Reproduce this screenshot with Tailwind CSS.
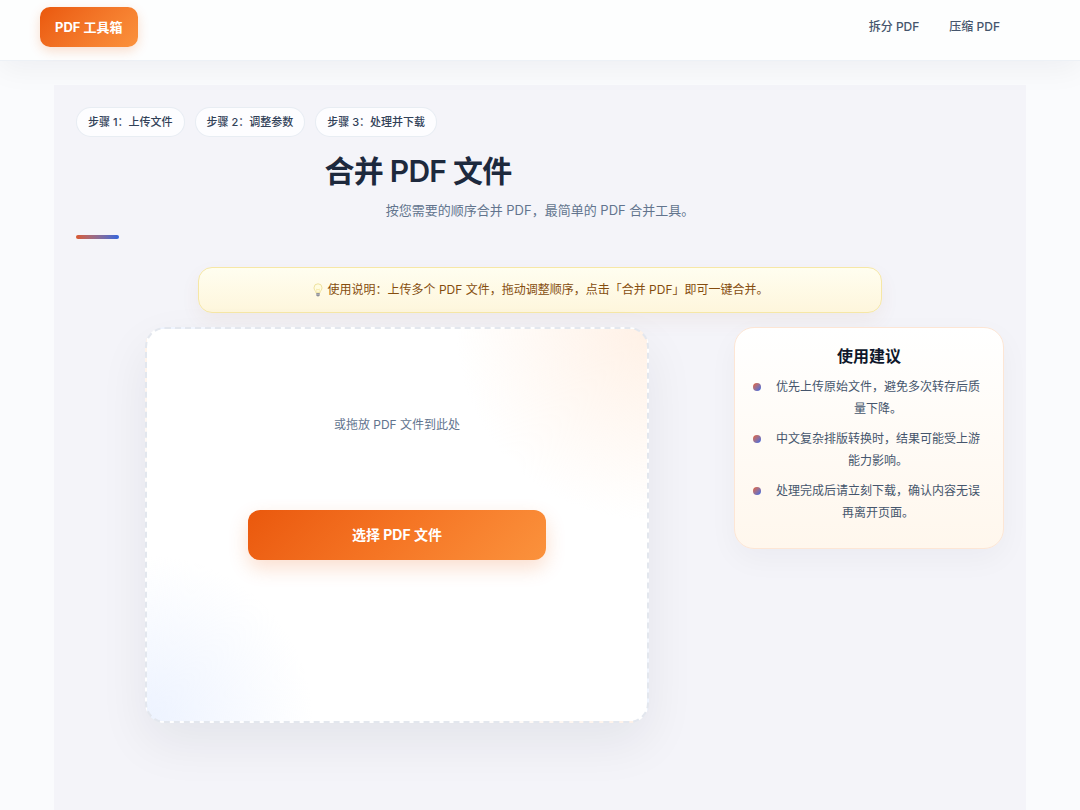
<!DOCTYPE html>
<html lang="zh-CN">
<head>
    <meta charset="UTF-8">
    <meta name="viewport" content="width=device-width, initial-scale=1.0">
    <title>合并 PDF 文件 - PDF 工具箱</title>
    <script src="https://cdn.jsdelivr.net/npm/@tailwindcss/browser@4"></script>
</head>
<body class="min-h-screen overflow-x-hidden bg-[#fafbfd] font-['Inter','Noto_Sans_CJK_SC',sans-serif] text-slate-800">
    <!-- Header -->
    <header class="relative z-10 flex items-center justify-between border-b border-slate-200/60 bg-[#fdfefe] pt-[7px] pr-20 pb-[13px] pl-10 shadow-[0_8px_30px_rgba(15,23,42,0.05)]">
        <a href="#" class="rounded-[10px] bg-linear-135 from-[#ea580c] to-[#fb923c] px-[15px] py-[10px] text-[13px] leading-5 font-bold text-white shadow-[0_4px_12px_rgba(234,88,12,0.2)]">PDF 工具箱</a>
        <nav class="flex gap-[30px] text-xs leading-5 font-medium text-slate-600">
            <a href="#">拆分 PDF</a>
            <a href="#">压缩 PDF</a>
        </nav>
    </header>

    <!-- Main content area -->
    <main class="mx-auto mt-6 min-h-[calc(100vh-84px)] w-[90%] bg-[#f4f4f9] px-[22px] pt-[22px] pb-16">
        <ol class="flex gap-[10px] text-[11px] leading-5 font-medium text-slate-700">
            <li class="rounded-full border border-slate-200/80 bg-[#fdfdff] px-[11px] py-1">步骤 1：上传文件</li>
            <li class="rounded-full border border-slate-200/80 bg-[#fdfdff] px-[11px] py-1">步骤 2：调整参数</li>
            <li class="rounded-full border border-slate-200/80 bg-[#fdfdff] px-[11px] py-1">步骤 3：处理并下载</li>
        </ol>

        <h1 class="mt-4 max-w-[684px] text-center text-3xl leading-9 font-semibold tracking-tight">合并 PDF 文件</h1>
        <p class="mt-[9px] text-center text-[13px] leading-6 text-slate-500">按您需要的顺序合并 PDF，最简单的 PDF 合并工具。</p>
        <div class="mt-[13px] h-1 w-[43px] rounded-full bg-linear-to-r from-[#d9572b] to-[#2f63dc]"></div>

        <!-- Usage hint -->
        <div class="mx-auto mt-7 flex max-w-[684px] items-center justify-center gap-1 rounded-[14px] border border-[#f6e7a6] bg-linear-to-b from-[#fffef0] to-[#fef6dc] px-4 py-3 text-xs leading-5 text-[#854d0e] shadow-[0_8px_20px_rgba(146,64,14,0.06)]">
            <svg class="h-[14px] w-3" viewBox="0 0 12 14" fill="none" aria-hidden="true">
                <path d="M6 .8a4 4 0 0 0-4 4c0 2 1.6 2.8 2 5h4c.4-2.2 2-3 2-5a4 4 0 0 0-4-4z" fill="#fffce0" stroke="#eee2a0" stroke-width="1"/>
                <path d="M5 9.500 4.600 6l1.400.8L7.400 6 7 9.500" stroke="#f0dc88" stroke-width=".5"/>
                <path d="M4.300 10h3.400v2.300c0 .6-.6 1.200-1.700 1.200s-1.700-.6-1.700-1.200z" fill="#8d8f96"/>
                <path d="M4.300 11.300h3.400" stroke="#c9cbd1" stroke-width=".6"/>
            </svg>
            <p>使用说明：上传多个 PDF 文件，拖动调整顺序，点击「合并 PDF」即可一键合并。</p>
        </div>

        <div class="mt-[14px] grid grid-cols-[minmax(0,1fr)_270px] items-start gap-4">
            <!-- Drop zone -->
            <section class="mx-auto flex min-h-[396px] w-full max-w-[504px] flex-col items-center rounded-[20px] border-2 border-dashed border-[#e3e7ee] bg-white bg-[radial-gradient(circle_at_100%_0%,#fff1e6_0%,#fff1e600_30%),radial-gradient(circle_at_0%_100%,#edf3ff_0%,#edf3ff00_26%)] px-6 pt-[84px] shadow-[0_20px_50px_rgba(15,23,42,0.07)]">
                <p class="text-xs leading-6 text-slate-500">或拖放 PDF 文件到此处</p>
                <button type="button" class="mt-[73px] h-[50px] w-full max-w-[298px] rounded-[12px] bg-linear-135 from-[#ea580c] via-[#f57524] to-[#fb923c] text-sm font-bold text-white shadow-[0_8px_20px_rgba(234,88,12,0.2)]">选择 PDF 文件</button>
            </section>

            <!-- Tips -->
            <aside class="rounded-[20px] border border-[#fde6d5] bg-linear-to-b from-white to-[#fff7ed] px-[18px] pt-4 pb-6 text-center shadow-[0_10px_30px_rgba(15,23,42,0.04)]">
                <h2 class="text-base leading-6 font-bold text-slate-900">使用建议</h2>
                <ul class="mt-2 flex flex-col gap-2 text-xs leading-[22px] text-slate-600">
                    <li class="flex gap-[10px]">
                        <span class="mt-[7px] size-2 shrink-0 rounded-full bg-linear-135 from-[#ea580c] to-[#2563eb]"></span>
                        <span class="flex-1">优先上传原始文件，避免多次转存后质量下降。</span>
                    </li>
                    <li class="flex gap-[10px]">
                        <span class="mt-[7px] size-2 shrink-0 rounded-full bg-linear-135 from-[#ea580c] to-[#2563eb]"></span>
                        <span class="flex-1">中文复杂排版转换时，结果可能受上游能力影响。</span>
                    </li>
                    <li class="flex gap-[10px]">
                        <span class="mt-[7px] size-2 shrink-0 rounded-full bg-linear-135 from-[#ea580c] to-[#2563eb]"></span>
                        <span class="flex-1">处理完成后请立刻下载，确认内容无误再离开页面。</span>
                    </li>
                </ul>
            </aside>
        </div>
    </main>
</body>
</html>
